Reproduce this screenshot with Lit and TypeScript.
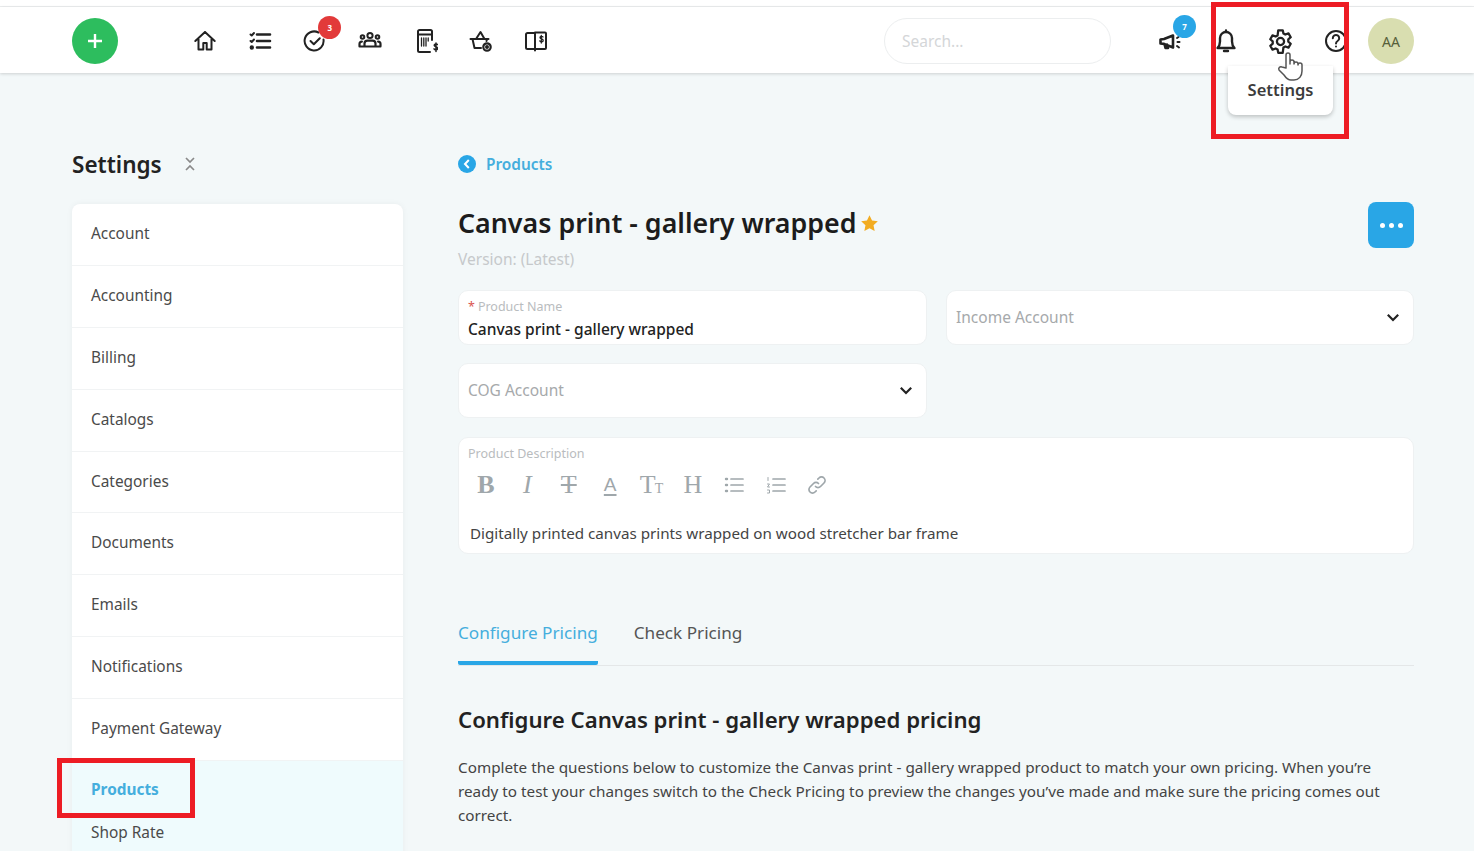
import { LitElement, html, css, svg } from 'lit';
import { customElement } from 'lit/decorators.js';

const navIcons = [
  svg`<path d="M12 3 2.300 12M12 3l9.700 9M5.500 10v10.500h4.800v-6.500h3.400v6.500h4.800V10"/>`,
  svg`<path d="M9 5.500h13M9 12h13M9 18.500h13" stroke-width="2.600"/><path d="M2.500 5.500l1.200 1L6 4M2.500 12l1.200 1L6 10.500" /><circle cx="3.800" cy="18.500" r="1.200" fill="currentColor"/>`,
  svg`<path d="M20.500 10.500A9.500 9.500 0 1 1 15.500 3.500"/><path d="M7.500 12l3.300 3.200 6-6"/>`,
  svg`<circle cx="12" cy="6.500" r="2.600"/><circle cx="4.500" cy="8" r="1.800"/><circle cx="19.500" cy="8" r="1.800"/><path d="M6.500 17v-2.400c0-1.700 1.300-3 3-3h5c1.700 0 3 1.300 3 3V17M1.500 17v-2c0-1.300 1-2.400 2.400-2.400M22.500 17v-2c0-1.300-1-2.400-2.400-2.400M1.500 17.500h21" stroke-width="2.200"/>`,
  svg`<path d="M16 23H5.500A1.500 1.500 0 0 1 4 21.500V2.500A1.500 1.500 0 0 1 5.500 1h11A1.500 1.500 0 0 1 18 2.500V11M4 5.500h14"/><path d="M7.500 9v8M9.800 9v8M12 9v8M14.200 9v3" stroke-width="1.300"/><path d="M23.500 15.500c-.5-.8-3.300-1-3.300.8s3.500 1.200 3.500 3-3 1.800-3.700.6M22 14v8.500" stroke-width="1.500"/>`,
  svg`<path d="M1.500 10h18M3.500 10l2 9h6.500M18 10l-.5 2M7 10l4.500-7 4 7"/><circle cx="18" cy="18" r="3.700" stroke-width="2.200"/><circle cx="18" cy="18" r="1" fill="currentColor"/>`,
  svg`<path d="M11 4H3.500a1.500 1.500 0 0 0-1.500 1.500v13A1.500 1.500 0 0 0 3.500 20H11zM11 3.500h10a1 1 0 0 1 1 1V19a1 1 0 0 1-1 1H11v1.500" stroke-width="2"/><path d="M19 8c-.4-.8-3-1-3 .6 0 1.700 3.200 1 3.200 2.800s-2.800 1.600-3.400.5M17.300 6.500v7.500" stroke-width="1.300"/>`,
];

const menu = ['Account', 'Accounting', 'Billing', 'Catalogs', 'Categories', 'Documents', 'Emails', 'Notifications', 'Payment Gateway'];

const chevron = html`<svg class="chev" viewBox="0 0 14 9"><path d="M1.800 1.800 7 7l5.200-5.200"/></svg>`;

const paragraph = `Complete the questions below to customize the Canvas print - gallery wrapped product to match your own pricing. When you’re ready to test your changes switch to the Check Pricing to preview the changes you’ve made and make sure the pricing comes out correct.`;

@customElement('app-root')
export class AppRoot extends LitElement {
  static styles = css`
    :host {
      display: block;
      position: relative;
      height: 851px;
      overflow: hidden;
      background: #f3f8f9;
      font-family: 'Noto Sans', 'Liberation Sans', sans-serif;
      color: #2b2b2b;
    }
    .topstrip {
      height: 6px;
      background: #fff;
      border-bottom: 1px solid #eceeef;
    }
    .topbar {
      height: 66px;
      box-sizing: border-box;
      background: #fff;
      box-shadow: 0 1px 3px rgba(0, 0, 0, 0.16);
      display: flex;
      align-items: center;
      padding: 2px 60px 0 72px;
      position: relative;
    }
    .add {
      width: 46px;
      height: 46px;
      border-radius: 50%;
      background: #2dbd5e;
      display: flex;
      align-items: center;
      justify-content: center;
      margin-right: 75px;
      flex: none;
    }
    .add svg {
      width: 20px;
      height: 20px;
      stroke: #fff;
      stroke-width: 2.400;
      fill: none;
    }
    .nav {
      display: flex;
      gap: 31.150px;
      flex: 1;
    }
    .icon {
      position: relative;
      width: 24px;
      height: 24px;
      color: #222;
      flex: none;
    }
    .icon svg {
      width: 24px;
      height: 24px;
      fill: none;
      stroke: currentColor;
      stroke-width: 2;
      stroke-linecap: round;
      stroke-linejoin: round;
      display: block;
    }
    .icon svg.gear {
      width: 27px;
      height: 27px;
      margin: -1.500px 0 0 -2.500px;
    }
    .badge {
      position: absolute;
      width: 23px;
      height: 23px;
      border-radius: 50%;
      top: -13px;
      left: 15px;
      color: #fff;
      font-size: 8px;
      font-weight: 700;
      display: flex;
      align-items: center;
      justify-content: center;
    }
    .badge.red { background: #e23a3a; }
    .badge.blue { background: #29a6e6; left: 14px; top: -14px; }
    .search {
      width: 227px;
      height: 46px;
      box-sizing: border-box;
      border: 1px solid #eceeef;
      border-radius: 23px;
      padding: 0 17px;
      display: flex;
      align-items: center;
      font-size: 15.500px;
      color: #d4d6d8;
      margin-right: 48px;
    }
    .actions {
      display: flex;
      gap: 31px;
      align-items: center;
    }
    .avatar {
      width: 46px;
      height: 46px;
      border-radius: 50%;
      background: #d9deb0;
      color: #56603a;
      font-size: 14px;
      display: flex;
      align-items: center;
      justify-content: center;
      margin-left: -11px;
    }
    .layout {
      display: grid;
      grid-template-columns: 331px 956px;
      gap: 55px;
      padding: 76px 0 0 72px;
    }
    .side-title {
      display: flex;
      align-items: center;
      gap: 22px;
      font-size: 22.500px;
      font-weight: 600;
      color: #222;
      height: 30px;
      margin-bottom: 25px;
    }
    .side-title svg {
      width: 12px;
      height: 16px;
      fill: none;
      stroke: #8a8a8a;
      stroke-width: 1.700;
    }
    .menu {
      background: #fff;
      border-radius: 8px 8px 0 0;
      box-shadow: 0 0 6px rgba(0, 0, 0, 0.05);
    }
    .row {
      height: 61.900px;
      box-sizing: border-box;
      border-bottom: 1px solid #f1f3f4;
      padding: 0 19px 2px;
      display: flex;
      align-items: center;
      font-size: 15.400px;
      color: #4a4a4a;
    }
    .active {
      background: #effbfd;
      height: 100px;
      padding: 19px 19px 0;
      font-size: 15.400px;
      color: #4a4a4a;
    }
    .active b {
      display: block;
      color: #45aedd;
      font-weight: 700;
      line-height: 20px;
      margin-bottom: 22px;
    }
    .crumb {
      display: flex;
      align-items: center;
      gap: 10px;
      color: #45aedd;
      font-size: 15.400px;
      font-weight: 600;
      height: 30px;
      margin-bottom: 25px;
    }
    .crumb svg {
      width: 18px;
      height: 18px;
    }
    .head {
      display: flex;
      justify-content: space-between;
      align-items: flex-start;
    }
    h1 {
      margin: 0;
      font-size: 26.800px;
      line-height: 38px;
      font-weight: 600;
      color: #1c1c1c;
      display: flex;
      align-items: center;
      gap: 4px;
    }
    h1 svg {
      width: 19px;
      height: 19px;
      fill: #f2ac22;
    }
    .more {
      width: 46px;
      height: 46px;
      margin-top: -2px;
      border-radius: 8px;
      background: #29a6e6;
      display: flex;
      align-items: center;
      justify-content: center;
      gap: 4px;
    }
    .more i {
      width: 5px;
      height: 5px;
      border-radius: 50%;
      background: #fff;
    }
    .version {
      font-size: 15.500px;
      color: #c6c9cb;
      line-height: 22px;
      margin: 0 0 20px;
    }
    .fields {
      display: grid;
      grid-template-columns: 469px 468px;
      gap: 18px 19px;
    }
    .field {
      background: #fff;
      border: 1px solid #eef1f2;
      border-radius: 10px;
      box-sizing: border-box;
      height: 55px;
      padding: 0 9px 2px;
      display: flex;
      align-items: center;
      justify-content: space-between;
      font-size: 15.500px;
      color: #a6a9ab;
    }
    .field.name {
      flex-direction: column;
      align-items: flex-start;
      justify-content: flex-start;
      padding-top: 8px;
    }
    .tiny {
      font-size: 12.500px;
      line-height: 16px;
      color: #b9bcbe;
    }
    .tiny em {
      color: #d9534f;
      font-style: normal;
      margin-right: 3px;
    }
    .value {
      font-size: 15.500px;
      font-weight: 500;
      line-height: 22px;
      color: #222;
      margin-top: 3px;
    }
    .chev {
      width: 14px;
      height: 9px;
      fill: none;
      stroke: #222;
      stroke-width: 2.200;
      margin: 2px 4px 0 0;
    }
    .desc {
      margin-top: 19px;
      height: 117px;
      background: #fff;
      border: 1px solid #eef1f2;
      border-radius: 10px;
      box-sizing: border-box;
      padding: 8px 9px;
    }
    .tools {
      display: flex;
      align-items: center;
      gap: 17.400px;
      height: 30px;
      margin: 8px 0 22px 6px;
      color: #9fa7ab;
      font-family: 'Liberation Serif', serif;
      font-size: 26px;
    }
    .tools > span {
      width: 24px;
      text-align: center;
      line-height: 30px;
      white-space: nowrap;
    }
    .tools b { font-weight: 700; }
    .tools i { font-style: italic; }
    .tools .small { font-size: 14px; line-height: 1; margin-left: -1px; }
    .tools .under {
      font-family: 'Liberation Sans', sans-serif;
      font-size: 19px;
    }
    .tools .under u {
      text-decoration-thickness: 2px;
      text-underline-offset: 3px;
    }
    .tools svg {
      width: 20px;
      height: 20px;
      fill: none;
      stroke: currentColor;
      stroke-width: 1.700;
      stroke-linecap: round;
      flex: none;
      margin: 0 2px;
    }
    .text {
      margin-left: 2px;
      font-size: 15.200px;
      line-height: 22px;
      color: #444;
    }
    .tabs {
      margin-top: 54px;
      display: flex;
      gap: 36px;
      height: 57px;
      border-bottom: 1px solid #e4e7e8;
      font-size: 17.150px;
      color: #555;
    }
    .tab {
      height: 57px;
      box-sizing: border-box;
      padding-top: 12px;
      line-height: 26px;
    }
    .tab.on {
      color: #45aedd;
      border-bottom: 4px solid #29a6e6;
      border-radius: 0 0 2px 2px;
    }
    h2 {
      margin: 38px 0 19px;
      font-size: 22.200px;
      line-height: 32px;
      font-weight: 600;
      color: #222;
    }
    p {
      margin: 0;
      font-size: 15.270px;
      line-height: 24px;
      color: #444;
    }
    .tip {
      position: absolute;
      left: 1228px;
      top: 66px;
      width: 105px;
      height: 49px;
      box-sizing: border-box;
      padding-top: 12px;
      background: #fff;
      border-radius: 0 0 8px 8px;
      box-shadow: 0 2px 4px rgba(0, 0, 0, 0.22);
      text-align: center;
      font-size: 16.500px;
      font-weight: 600;
      color: #3c3c3c;
    }
    .hand {
      position: absolute;
      left: 1277px;
      top: 51px;
      width: 27px;
      height: 31px;
    }
    .mark {
      position: absolute;
      box-sizing: border-box;
      border: 5px solid #ed1c24;
    }
    .mark.settings { left: 1211px; top: 2px; width: 138px; height: 137px; }
    .mark.products { left: 57px; top: 758px; width: 138px; height: 60px; }
  `;

  render() {
    return html`
      <div class="topstrip"></div>
      <header class="topbar">
        <div class="add"><svg viewBox="0 0 20 20"><path d="M10 3v14M3 10h14"/></svg></div>
        <nav class="nav">
          ${navIcons.map((icon, i) => html`
            <div class="icon">
              <svg viewBox="0 0 24 24">${icon}</svg>
              ${i === 2 ? html`<span class="badge red">3</span>` : ''}
            </div>
          `)}
        </nav>
        <div class="search">Search...</div>
        <div class="actions">
          <div class="icon">
            <svg viewBox="0 0 24 24"><path d="M1.500 10.500v4l3.500.4L14 18.500V6.500L5 10zM5.500 15l1 4h2.500l-1-3.500" stroke-width="2.600"/><path d="M18 9l1.500-1M18.500 13h2M18 17l2 1.500"/></svg>
            <span class="badge blue">7</span>
          </div>
          <div class="icon">
            <svg viewBox="0 0 24 24"><path d="M3.500 19h17c-1.500-1.500-2.500-3-2.500-6.500V9a6 6 0 0 0-12 0v3.500c0 3.500-1 5-2.500 6.500zM12 3V1.500M10 22h4" stroke-width="2.400"/></svg>
          </div>
          <div class="icon">
            <svg class="gear" viewBox="0 0 24 24"><circle cx="12" cy="12" r="3.200"/><path d="M10 2h4l.6 2.900 1.700.9 2.800-1 2 3.400-2.200 1.900v2l2.200 1.900-2 3.400-2.800-1-1.700.9L14 22h-4l-.6-2.900-1.700-.9-2.800 1-2-3.400 2.200-1.900v-2L2.900 10l2-3.400 2.800 1 1.700-.9z"/></svg>
          </div>
          <div class="icon">
            <svg viewBox="0 0 24 24"><circle cx="12" cy="12" r="10"/><path d="M8.800 9.200a3.200 3.200 0 1 1 4.800 2.800c-1 .6-1.600 1.300-1.600 2.500"/><circle cx="12" cy="17.600" r="1" fill="currentColor" stroke="none"/></svg>
          </div>
          <div class="avatar">AA</div>
        </div>
      </header>

      <div class="layout">
        <aside>
          <div class="side-title">
            Settings
            <svg viewBox="0 0 12 16"><path d="M2 2l4 4 4-4M2 14l4-4 4 4"/></svg>
          </div>
          <div class="menu">
            ${menu.map((m) => html`<div class="row">${m}</div>`)}
            <div class="active"><b>Products</b>Shop Rate</div>
          </div>
        </aside>

        <main>
          <div class="crumb">
            <svg viewBox="0 0 18 18"><circle cx="9" cy="9" r="9" fill="#29a6e6"/><path d="M10.800 5 7 9l3.800 4" fill="none" stroke="#fff" stroke-width="2"/></svg>
            Products
          </div>
          <div class="head">
            <h1>Canvas print - gallery wrapped<svg viewBox="0 0 24 24"><path d="M12 1.500l3.200 6.800 7.300.9-5.400 5.100 1.400 7.300L12 18l-6.500 3.600 1.400-7.300L1.500 9.200l7.300-.9z"/></svg></h1>
            <div class="more"><i></i><i></i><i></i></div>
          </div>
          <div class="version">Version: (Latest)</div>

          <div class="fields">
            <div class="field name">
              <div class="tiny"><em>*</em>Product Name</div>
              <div class="value">Canvas print - gallery wrapped</div>
            </div>
            <div class="field">Income Account${chevron}</div>
            <div class="field">COG Account${chevron}</div>
          </div>

          <div class="desc">
            <div class="tiny">Product Description</div>
            <div class="tools">
              <span><b>B</b></span>
              <span><i>I</i></span>
              <span><s>T</s></span>
              <span class="under"><u>A</u></span>
              <span>T<span class="small">T</span></span>
              <span>H</span>
              <svg viewBox="0 0 20 20"><path d="M7 4h12M7 10h12M7 16h12"/><path d="M2 4h1M2 10h1M2 16h1" stroke-width="2.400"/></svg>
              <svg viewBox="0 0 20 20"><path d="M7 4h12M7 10h12M7 16h12"/><path d="M2 2.500v3M1.500 9h2l-2 3h2M1.500 15h2v3h-2" stroke-width="1"/></svg>
              <svg viewBox="0 0 20 20"><path d="M8.500 11.500a3.500 3.500 0 0 0 5 0l3.500-3.500a3.500 3.500 0 0 0-5-5l-1.200 1.200M11.500 8.500a3.500 3.500 0 0 0-5 0L3 12a3.500 3.500 0 0 0 5 5l1.200-1.200"/></svg>
            </div>
            <div class="text">Digitally printed canvas prints wrapped on wood stretcher bar frame</div>
          </div>

          <div class="tabs">
            <div class="tab on">Configure Pricing</div>
            <div class="tab">Check Pricing</div>
          </div>

          <h2>Configure Canvas print - gallery wrapped pricing</h2>
          <p>${paragraph}</p>
        </main>
      </div>

      <div class="tip">Settings</div>
      <svg class="hand" viewBox="0 0 27 31"><path d="M9 17V4a2 2 0 0 1 4 0v9l0-2a2 2 0 0 1 4 0v2a2 2 0 0 1 4 0v1a2 2 0 0 1 4 0v6c0 5-3 9-8 9h-3c-3 0-5-2-7-5L2 19c-1-2 1-4 3-3z" fill="#fff" stroke="#555" stroke-width="1.500" stroke-linejoin="round"/></svg>
      <div class="mark settings"></div>
      <div class="mark products"></div>
    `;
  }
}
